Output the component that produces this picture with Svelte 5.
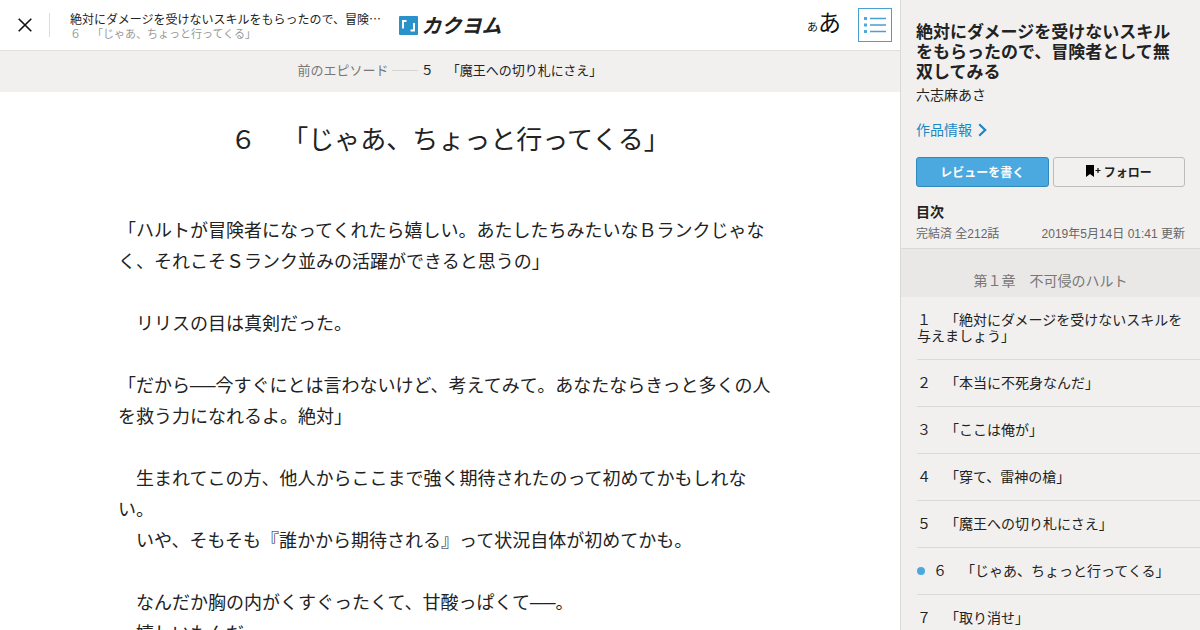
<script>
  const workTitle = '絶対にダメージを受けないスキルをもらったので、冒険者として無双してみる';
  const episodeTitle = '６　「じゃあ、ちょっと行ってくる」';

  const lines = [
    '「ハルトが冒険者になってくれたら嬉しい。あたしたちみたいなＢランクじゃなく、それこそＳランク並みの活躍ができると思うの」',
    '',
    '　リリスの目は真剣だった。',
    '',
    '「だから──今すぐにとは言わないけど、考えてみて。あなたならきっと多くの人を救う力になれるよ。絶対」',
    '',
    '　生まれてこの方、他人からここまで強く期待されたのって初めてかもしれない。',
    '　いや、そもそも『誰かから期待される』って状況自体が初めてかも。',
    '',
    '　なんだか胸の内がくすぐったくて、甘酸っぱくて──。',
    '　嬉しいもんだ。'
  ];

  const episodes = [
    '１　「絶対にダメージを受けないスキルを与えましょう」',
    '２　「本当に不死身なんだ」',
    '３　「ここは俺が」',
    '４　「穿て、雷神の槍」',
    '５　「魔王への切り札にさえ」',
    '６　「じゃあ、ちょっと行ってくる」',
    '７　「取り消せ」'
  ];
  const current = 5;
</script>

<div class="page">
  <div class="reader">
    <header>
      <button class="icon close" aria-label="閉じる">
        <svg width="14" height="14" viewBox="0 0 14 14"><path d="M.7.7 13.3 13.3M13.3.7.7 13.3" stroke="#111" stroke-width="1.6" fill="none" /></svg>
      </button>
      <div class="titles">
        <span class="work">{workTitle}</span>
        <span class="ep">{episodeTitle}</span>
      </div>
      <a class="logo" href="#top">
        <svg width="19" height="19" viewBox="0 0 19 19">
          <rect width="19" height="19" rx="1" fill="#2b91c9" />
          <path d="M4 12.500V5H7.500M11.500 14.500H15V7" fill="none" stroke="#fff" stroke-width="1.900" />
        </svg>
        <span>カクヨム</span>
      </a>
      <div class="tools">
        <button class="icon size" aria-label="文字サイズ"><small>あ</small><span>あ</span></button>
        <button class="icon menu" aria-label="目次">
          <svg width="22" height="16" viewBox="0 0 22 16">
            <path d="M0 1.500h3M0 8h3M0 14.500h3" stroke="#4fa9dc" stroke-width="3" />
            <path d="M6 1.500h16M6 8h16M6 14.500h16" stroke="#4a9fd0" stroke-width="1.600" />
          </svg>
        </button>
      </div>
    </header>

    <a class="previous" href="#previous">
      <span class="label">前のエピソード</span><i></i><span>５　「魔王への切り札にさえ」</span>
    </a>

    <main>
      <h1>{episodeTitle}</h1>
      {#each lines as line}
        <p>{line}</p>
      {/each}
    </main>
  </div>

  <aside>
    <div class="info">
      <h2>{workTitle}</h2>
      <div class="author">六志麻あさ</div>
      <a class="detail" href="#work">
        作品情報
        <svg width="9" height="14" viewBox="0 0 9 14"><path d="M1.200 1.200 7.200 7l-6 5.800" fill="none" stroke="#1b87c2" stroke-width="2.200" /></svg>
      </a>
      <div class="actions">
        <button class="review">レビューを書く</button>
        <button class="follow">
          <svg width="16" height="12" viewBox="0 0 16 12"><path d="M0 0h8v12L4 9l-4 3z" fill="#000" /><path d="M9.500 5.500h5M12 3v5" stroke="#111" stroke-width="1.200" /></svg>
          フォロー
        </button>
      </div>
      <h3>目次</h3>
      <div class="meta"><span>完結済 全212話</span><span>2019年5月14日 01:41 更新</span></div>
    </div>
    <h4>第１章　不可侵のハルト</h4>
    <ol>
      {#each episodes as episode, i}
        <li><a href="#episode" class:current={i === current}>{episode}</a></li>
      {/each}
    </ol>
  </aside>
</div>

<style>
  :global(body) {
    margin: 0;
    font-family: "Liberation Sans", "Noto Sans CJK JP", sans-serif;
    text-spacing-trim: space-all;
    color: #222;
    background: #fff;
  }
  * { box-sizing: border-box; }
  h1, h2, h3, h4, p, ol { margin: 0; padding: 0; }
  a { color: inherit; text-decoration: none; }
  button { font: inherit; color: inherit; cursor: pointer; }
  svg { display: block; flex: none; }

  .page {
    display: grid;
    grid-template-columns: minmax(0, 1fr) 300px;
    height: 100vh;
    overflow: hidden;
  }
  .reader { min-width: 0; }

  header {
    display: grid;
    grid-template-columns: 50px minmax(0, 1fr) auto minmax(0, 1fr) 50px;
    align-items: center;
    height: 51px;
    border-bottom: 1px solid #dfdfdd;
  }
  .icon { display: flex; padding: 0; border: 0; background: none; }
  .close {
    height: 24px;
    align-items: center;
    justify-content: center;
    border-right: 1px solid #ddd;
  }
  .titles {
    display: flex;
    flex-direction: column;
    padding: 2px 16px 0 20px;
    min-width: 0;
    white-space: nowrap;
  }
  .work {
    overflow: hidden;
    text-overflow: ellipsis;
    font: 12px/16px "Noto Sans CJK JP", sans-serif;
  }
  .ep { font-size: 11px; line-height: 14px; color: #999; }
  .logo {
    display: flex;
    align-items: center;
    gap: 4px;
    font: italic 700 20px/24px "Noto Sans CJK JP", sans-serif;
  }
  .tools {
    grid-column: 4 / 6;
    display: flex;
    align-items: center;
    justify-content: flex-end;
    gap: 17px;
    padding-right: 8px;
  }
  .size { align-items: baseline; line-height: 38px; color: #111; }
  .size small { font-size: 11px; }
  .size span { font-size: 23px; }
  .menu {
    width: 34px;
    height: 34px;
    align-items: center;
    justify-content: center;
    border: 1px solid #4a9fd0;
  }

  .previous {
    display: flex;
    align-items: center;
    justify-content: center;
    height: 41px;
    padding-bottom: 2px;
    background: #f1f0ee;
    font-size: 13px;
    line-height: 20px;
  }
  .previous .label { color: #777; }
  .previous i { width: 26px; margin: 0 3px; border-top: 1px solid #d5d5d3; }

  main { padding: 28px 118px 0; }
  h1 {
    margin-bottom: 56px;
    font-size: 26px;
    line-height: 40px;
    font-weight: 400;
    text-align: center;
  }
  p { min-height: 31px; font-size: 18px; line-height: 31px; }

  aside {
    min-width: 0;
    background: #f1f0ee;
    border-left: 1px solid #d9d9d7;
  }
  .info { padding: 23px 15px 5px; border-bottom: 1px solid #d9d9d7; }
  h2 { font-size: 17px; line-height: 20px; }
  .author { margin-top: 2px; font-size: 14px; line-height: 20px; }
  .detail {
    display: flex;
    align-items: center;
    gap: 6px;
    margin-top: 15px;
    font-size: 14px;
    line-height: 20px;
    color: #1b87c2;
  }
  .actions {
    display: grid;
    grid-template-columns: 1fr 1fr;
    gap: 4px;
    margin-top: 17px;
  }
  .actions button {
    display: flex;
    align-items: center;
    justify-content: center;
    gap: 2px;
    height: 30px;
    padding: 0 0 2px;
    border: 1px solid #bcbcba;
    border-radius: 3px;
    background: #f1f0ee;
    font-size: 12px;
    font-weight: 700;
  }
  .actions .review { border-color: #3089b8; background: #4ba9df; color: #fff; }
  h3 { margin-top: 15px; font-size: 14px; line-height: 20px; }
  .meta {
    display: flex;
    justify-content: space-between;
    margin-top: 3px;
    font-size: 12px;
    line-height: 18px;
    color: #666;
  }
  h4 {
    padding: 22px 0 6px;
    background: #e9e8e6;
    font-size: 14px;
    line-height: 20px;
    font-weight: 400;
    text-align: center;
    color: #777;
  }
  ol { list-style: none; padding-left: 16px; }
  li a {
    display: block;
    padding: 15px 15px 15px 0;
    border-bottom: 1px solid #d9d9d7;
    font-size: 14px;
    line-height: 16px;
  }
  .current::before {
    content: "";
    display: inline-block;
    width: 8px;
    height: 8px;
    margin-right: 8px;
    border-radius: 50%;
    background: #4ba9df;
    vertical-align: 1px;
  }
</style>
